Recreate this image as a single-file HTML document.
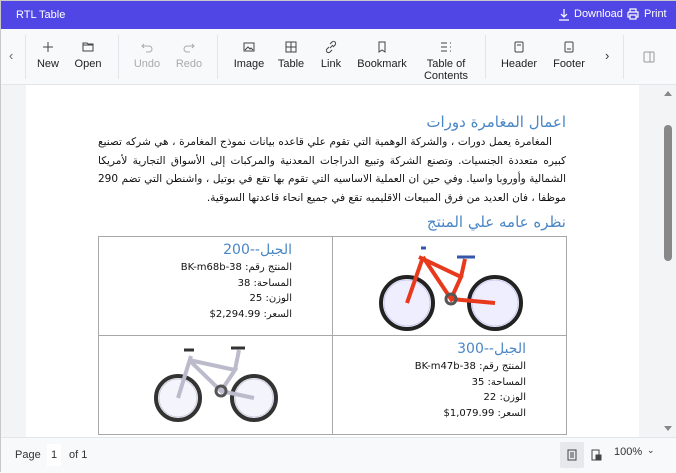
<!DOCTYPE html>
<html><head><meta charset="utf-8"><style>
*{box-sizing:border-box;margin:0;padding:0}
body{width:676px;height:472px;overflow:hidden;font-family:"Liberation Sans","DejaVu Sans",sans-serif;background:#fff;position:relative;border:1px solid #c8c8c8}
.top{position:absolute;left:0;top:0;width:676px;height:28px;background:#4f46e5;color:#fff;font-size:11px}
.tb{position:absolute;left:0;top:28px;width:676px;height:56px;background:#f8f9fb;border-bottom:1px solid #e3e5e8}
.btn{position:absolute;top:0;height:56px;text-align:center;font-size:11px;color:#222;line-height:12px}
.btn svg{display:block;margin:11px auto 4px;width:14px;height:14px}
.dis{color:#aaa}
.sep{position:absolute;top:6px;width:1px;height:44px;background:#e3e5e8}
.area{position:absolute;left:0;top:84px;width:676px;height:352px;background:#f3f4f6}
.page{position:absolute;left:25px;top:0;width:613px;height:352px;background:#fff}
.ar{font-family:"DejaVu Sans","Noto Sans CJK SC",sans-serif;direction:rtl}
.h{position:absolute;color:#4a86c5;font-size:15px}
.p{position:absolute;width:468px;font-size:10.5px;line-height:18.5px;text-align:justify;color:#111}
table{position:absolute;left:97px;top:235px;width:469px;border-collapse:collapse;table-layout:fixed}
td{border:1.5px solid #a8a8a8;width:234px;height:99px;vertical-align:top;padding:0;overflow:hidden}
td svg{display:block}
.c{direction:rtl;text-align:right;font-family:"DejaVu Sans",sans-serif;font-size:10px;line-height:15.5px;padding-top:4px;color:#111;padding-right:40px;height:96px}
.c b{font-weight:normal;color:#4a86c5;font-size:14px;display:block;line-height:19px}
.sb{position:absolute;left:658px;top:84px;width:17px;height:352px;background:#f3f4f6}
.st{position:absolute;left:0;top:436px;width:676px;height:36px;background:#f8f9fb;border-top:1px solid #e3e5e8;font-size:11px;color:#333}
</style></head><body>
<div class="top"><span style="position:absolute;left:15px;top:8px">RTL Table</span>
<svg style="position:absolute;left:557px;top:7px" width="12" height="13" viewBox="0 0 12 13" fill="none" stroke="#fff" stroke-width="1.2"><path d="M6 1v8M3 6l3 3 3-3M1 12h10"/></svg>
<span style="position:absolute;left:573px;top:7px">Download</span>
<svg style="position:absolute;left:626px;top:7px" width="12" height="12" viewBox="0 0 12 12" fill="none" stroke="#fff" stroke-width="1.2"><path d="M3 4V1h6v3M1 4h10v5H9M3 9H1V4M3 7h6v4H3z"/></svg>
<span style="position:absolute;left:643px;top:7px">Print</span></div>
<div class="tb">
<span style="position:absolute;left:8px;top:19px;color:#666;font-size:13px">‹</span>
<div class="sep" style="left:24px"></div>
<div class="btn" style="left:33px;width:28px"><svg viewBox="0 0 14 14" stroke="#444" fill="none"><path d="M7 2v10M2 7h10"/></svg>New</div>
<div class="btn" style="left:72px;width:30px"><svg viewBox="0 0 14 14" stroke="#444" fill="none"><path d="M2 3h4l1 1h5v7H2z M2 5h10"/></svg>Open</div>
<div class="sep" style="left:117px"></div>
<div class="btn dis" style="left:131px;width:30px"><svg viewBox="0 0 14 14" stroke="#aaa" fill="none"><path d="M4 4l-2 2 2 2M2 6h7a3 3 0 010 6H6"/></svg>Undo</div>
<div class="btn dis" style="left:174px;width:28px"><svg viewBox="0 0 14 14" stroke="#aaa" fill="none"><path d="M10 4l2 2-2 2M12 6H5a3 3 0 000 6h3"/></svg>Redo</div>
<div class="sep" style="left:216px"></div>
<div class="btn" style="left:231px;width:34px"><svg viewBox="0 0 14 14" stroke="#444" fill="none"><rect x="2" y="3" width="10" height="8"/><path d="M3 10l3-3 2 2 1-1 2 2"/></svg>Image</div>
<div class="btn" style="left:275px;width:30px"><svg viewBox="0 0 14 14" stroke="#444" fill="none"><rect x="2" y="2" width="10" height="10"/><path d="M7 2v10M2 7h10"/></svg>Table</div>
<div class="btn" style="left:317px;width:26px"><svg viewBox="0 0 14 14" stroke="#444" fill="none"><path d="M6 8l3-3M5 7L3 9a2 2 0 003 3l2-2M9 7l2-2a2 2 0 00-3-3L6 4"/></svg>Link</div>
<div class="btn" style="left:355px;width:52px"><svg viewBox="0 0 14 14" stroke="#444" fill="none"><path d="M4 2h6v10l-3-2-3 2z"/></svg>Bookmark</div>
<div class="btn" style="left:420px;width:50px"><svg viewBox="0 0 14 14" stroke="#444" fill="none"><path d="M2 3h6M2 7h6M2 11h6M11 3h1M11 7h1M11 11h1"/></svg>Table of<br>Contents</div>
<div class="sep" style="left:484px"></div>
<div class="btn" style="left:498px;width:40px"><svg viewBox="0 0 14 14" stroke="#444" fill="none"><rect x="3" y="2" width="8" height="10" rx="1"/><path d="M5 5h4"/></svg>Header</div>
<div class="btn" style="left:550px;width:36px"><svg viewBox="0 0 14 14" stroke="#444" fill="none"><rect x="3" y="2" width="8" height="10" rx="1"/><path d="M5 9h4"/></svg>Footer</div>
<span style="position:absolute;left:604px;top:19px;color:#333;font-size:13px">›</span>
<div class="sep" style="left:622px"></div>
<svg style="position:absolute;left:642px;top:22px" width="12" height="12" viewBox="0 0 12 12" fill="none" stroke="#999"><rect x="1" y="1" width="10" height="10" rx="1"/><path d="M7 1v10"/></svg>
</div>
<div class="area"><div class="page">
<div class="h ar" style="top:28px;right:73px">اعمال المغامرة دورات</div>
<div class="p ar" style="left:72px;top:48px">&nbsp;&nbsp;&nbsp;&nbsp;المغامرة يعمل دورات ، والشركة الوهمية التي تقوم علي قاعده بيانات نموذج المغامرة ، هي شركه تصنيع كبيره متعددة الجنسيات. وتصنع الشركة وتبيع الدراجات المعدنية والمركبات إلى الأسواق التجارية لأمريكا الشمالية وأوروبا واسيا. وفي حين ان العملية الاساسيه التي تقوم بها تقع في بوتيل ، واشنطن التي تضم 290 موظفا ، فان العديد من فرق المبيعات الاقليميه تقع في جميع انحاء قاعدتها السوقية.</div>
<div class="h ar" style="top:128px;right:73px">نظره عامه علي المنتج</div>
</div></div>
<table>
<tr><td><div class="c"><b>الجبل--200</b>المنتج رقم: BK-m68b-38<br>المساحة: 38<br>الوزن: 25<br>السعر: 2,294.99$</div></td>
<td><svg width="234" height="96" viewBox="0 0 234 96"><g fill="none"><circle cx="74" cy="66" r="26" stroke="#222" stroke-width="4"/><circle cx="74" cy="66" r="23" stroke="#c8c8f0" fill="#eef"/><circle cx="162" cy="66" r="26" stroke="#222" stroke-width="4"/><circle cx="162" cy="66" r="23" stroke="#c8c8f0" fill="#eef"/><path d="M74 66L90 20M86 20L128 40L118 62L90 20M118 62L162 66M128 40L132 22" stroke="#e8391c" stroke-width="4"/><path d="M88 11l5 0M124 20h18" stroke="#35a" stroke-width="3"/><circle cx="118" cy="62" r="5" stroke="#555" stroke-width="3"/></g></svg></td></tr>
<tr><td><svg width="234" height="96" viewBox="0 0 234 96"><g fill="none"><circle cx="79" cy="62" r="22" stroke="#333" stroke-width="4"/><circle cx="79" cy="62" r="19" stroke="#ccd" fill="#f4f4fc"/><circle cx="155" cy="62" r="22" stroke="#333" stroke-width="4"/><circle cx="155" cy="62" r="19" stroke="#ccd" fill="#f4f4fc"/><path d="M79 62L92 20M90 24L136 34L122 55L90 24M122 55L155 62M136 34L140 14" stroke="#bbc" stroke-width="4"/><path d="M85 14h10M132 12h14" stroke="#333" stroke-width="3"/><circle cx="122" cy="55" r="5" stroke="#555" stroke-width="3"/></g></svg></td>
<td><div class="c"><b>الجبل--300</b>المنتج رقم: BK-m47b-38<br>المساحة: 35<br>الوزن: 22<br>السعر: 1,079.99$</div></td></tr>
</table>
<div class="sb"><div style="position:absolute;left:5px;top:6px;border:4px solid transparent;border-bottom:5px solid #888;border-top:0"></div><div style="position:absolute;left:5px;top:40px;width:8px;height:136px;border-radius:4px;background:#888"></div><div style="position:absolute;left:5px;top:341px;border:4px solid transparent;border-top:5px solid #888;border-bottom:0"></div></div>
<div class="st"><span style="position:absolute;left:14px;top:11px">Page</span><span style="position:absolute;left:46px;top:6px;width:14px;height:22px;background:#fff;text-align:center;line-height:22px">1</span><span style="position:absolute;left:68px;top:11px">of 1</span>
<div style="position:absolute;left:559px;top:4px;width:24px;height:26px;background:#e6e8eb;border-radius:2px"></div>
<svg style="position:absolute;left:566px;top:11px" width="10" height="12" viewBox="0 0 10 12" fill="none" stroke="#444"><rect x="1" y="1" width="8" height="10"/><path d="M3 4h4M3 6h4M3 8h4"/></svg>
<svg style="position:absolute;left:590px;top:11px" width="11" height="12" viewBox="0 0 11 12" fill="none" stroke="#444"><rect x="1" y="1" width="7" height="10"/><rect x="5" y="6" width="5" height="5" fill="#444"/></svg>
<span style="position:absolute;left:613px;top:8px">100%</span><span style="position:absolute;left:646px;top:7px;font-size:9px">⌄</span></div>
</body></html>
